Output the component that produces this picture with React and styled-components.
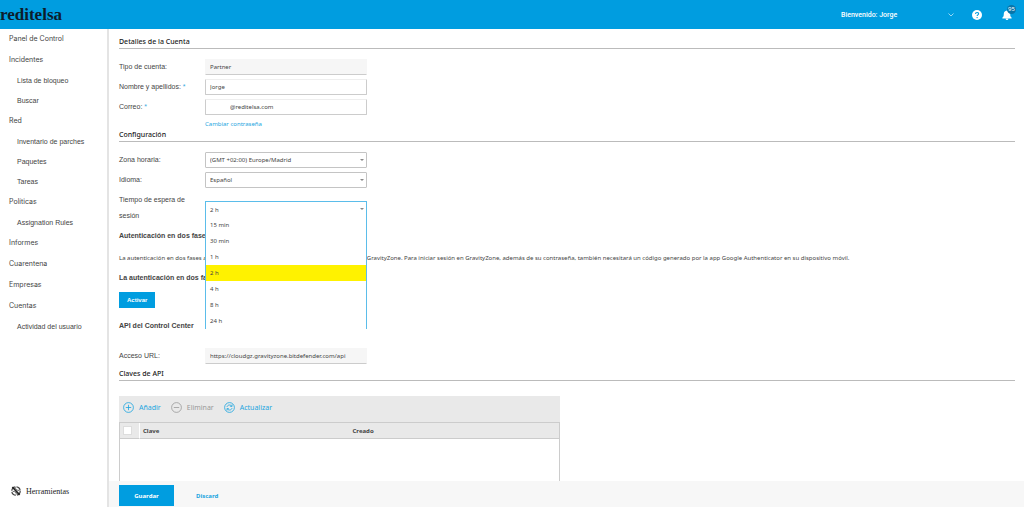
import React, { useState } from 'react'
import styled, { createGlobalStyle } from 'styled-components'


const menu = [
    { label: 'Panel de Control' },
    { label: 'Incidentes' },
    { label: 'Lista de bloqueo', sub: true },
    { label: 'Buscar', sub: true },
    { label: 'Red' },
    { label: 'Inventario de parches', sub: true },
    { label: 'Paquetes', sub: true },
    { label: 'Tareas', sub: true },
    { label: 'Políticas' },
    { label: 'Assignation Rules', sub: true },
    { label: 'Informes' },
    { label: 'Cuarentena' },
    { label: 'Empresas' },
    { label: 'Cuentas' },
    { label: 'Actividad del usuario', sub: true },
]

const timeouts = ['15 min', '30 min', '1 h', '2 h', '4 h', '8 h', '24 h']

export default function App() {
    const [timeout, setTimeoutValue] = useState('2 h')
    const [open, setOpen] = useState(true)

    const pick = (value) => {
        setTimeoutValue(value)
        setOpen(false)
    }

    return (
        <Page>
            <GlobalStyle />
            <Header>
                <Logo>reditelsa</Logo>
                <UserButton type="button">
                    Bienvenido: Jorge
                    <svg width="6" height="4" viewBox="0 0 6 4" aria-hidden="true">
                        <path d="M0.5 0.5 L3 3 L5.5 0.5" fill="none" stroke="#bfe6f8" strokeWidth="0.8" />
                    </svg>
                </UserButton>
                <IconButton type="button" aria-label="Ayuda">
                    <svg width="10" height="10" viewBox="0 0 10 10">
                        <circle cx="5" cy="5" r="5" fill="#fff" />
                        <path d="M3.5 3.9 C3.5 2 6.6 2 6.6 3.8 C6.6 4.9 5.1 4.8 5.1 6.1" fill="none" stroke="#009de0" strokeWidth="1.1" />
                        <circle cx="5.1" cy="7.6" r="0.7" fill="#009de0" />
                    </svg>
                </IconButton>
                <IconButton type="button" aria-label="Notificaciones">
                    <svg width="10" height="10" viewBox="0 0 10 10">
                        <path d="M5 0.4 C7.4 0.6 8.2 2.2 8.2 4 C8.2 6 8.6 6.8 9.6 7.6 V8.6 H0.4 V7.6 C1.4 6.8 1.8 6 1.8 4 C1.8 2.2 2.6 0.6 5 0.4 Z" fill="#fff" />
                        <path d="M3.6 8.4 H6.4 C6.2 10.4 3.8 10.4 3.6 8.4 Z" fill="#fff" />
                    </svg>
                    <Count>95</Count>
                </IconButton>
            </Header>

            <Sidebar>
                <nav>
                    {menu.map((item) => (
                        <MenuLink href="#" key={item.label} $sub={item.sub}>{item.label}</MenuLink>
                    ))}
                </nav>
                <Tools href="#">
                    <svg width="10" height="10" viewBox="0 0 10 10" aria-hidden="true">
                        <circle cx="5" cy="5" r="4.2" fill="none" stroke="#444" strokeWidth="1.2" strokeDasharray="5.4 1.2" />
                        <path d="M1.4 1 L8.6 8.8" stroke="#222" strokeWidth="1.7" />
                        <path d="M4.4 1.4 C4.4 3.4 6 4.6 8.4 4.4 M1.8 5.4 C3.8 5.2 5.4 6.4 5.4 8.4" fill="none" stroke="#444" strokeWidth="0.8" />
                    </svg>
                    Herramientas
                </Tools>
            </Sidebar>

            <Main>
                <Title>Detalles de la Cuenta</Title>
                <Fields>
                    <Row>
                        <Label htmlFor="type">Tipo de cuenta:</Label>
                        <Input id="type" defaultValue="Partner" readOnly />
                    </Row>
                    <Row>
                        <Label htmlFor="name">Nombre y apellidos: <Star>*</Star></Label>
                        <Input id="name" defaultValue="Jorge" />
                    </Row>
                    <Row>
                        <Label htmlFor="mail">Correo: <Star>*</Star></Label>
                        <Input id="mail" defaultValue="@reditelsa.com" $indent />
                    </Row>
                    <PasswordLink href="#">Cambiar contraseña</PasswordLink>
                </Fields>

                <Title>Configuración</Title>
                <Fields>
                    <Row>
                        <Label htmlFor="zone">Zona horaria:</Label>
                        <SelectBox>
                            <Select id="zone"><option>(GMT +02:00) Europe/Madrid</option></Select>
                        </SelectBox>
                    </Row>
                    <Row>
                        <Label htmlFor="lang">Idioma:</Label>
                        <SelectBox>
                            <Select id="lang"><option>Español</option></Select>
                        </SelectBox>
                    </Row>
                    <Row>
                        <Label as="span" id="timeout-label">Tiempo de espera de sesión</Label>
                        <Dropdown>
                            <DropdownButton
                                type="button"
                                aria-haspopup="listbox"
                                aria-expanded={open}
                                aria-labelledby="timeout-label"
                                onClick={() => setOpen(!open)}
                            >
                                {timeout}
                            </DropdownButton>
                            {open && (
                                <Options role="listbox" aria-labelledby="timeout-label">
                                    {timeouts.map((t) => (
                                        <Option
                                            key={t}
                                            role="option"
                                            aria-selected={t === timeout}
                                            onClick={() => pick(t)}
                                        >
                                            {t}
                                        </Option>
                                    ))}
                                </Options>
                            )}
                        </Dropdown>
                    </Row>
                </Fields>

                <SubTitle>Autenticación en dos fases</SubTitle>
                <Text>
                    La autenticación en dos fases añade una capa adicional de seguridad para su cuenta de GravityZone. Para iniciar sesión en GravityZone, además de su contraseña, también necesitará un código generado por la app Google Authenticator en su dispositivo móvil.
                </Text>
                <Status>La autenticación en dos fases está inactiva</Status>
                <Activate type="button">Activar</Activate>

                <SubTitle>API del Control Center</SubTitle>
                <ApiFields>
                    <Row>
                        <Label htmlFor="url">Acceso URL:</Label>
                        <Input id="url" defaultValue="https://cloudgz.gravityzone.bitdefender.com/api" readOnly />
                    </Row>
                </ApiFields>
                <Title>Claves de API</Title>

                <Panel>
                    <Toolbar>
                        <Action type="button">
                            <svg width="11" height="11" viewBox="0 0 11 11" aria-hidden="true">
                                <circle cx="5.5" cy="5.5" r="4.9" />
                                <path d="M5.5 2.8 V8.2 M2.8 5.5 H8.2" />
                            </svg>
                            Añadir
                        </Action>
                        <Action type="button" disabled>
                            <svg width="11" height="11" viewBox="0 0 11 11" aria-hidden="true">
                                <circle cx="5.5" cy="5.5" r="4.9" />
                                <path d="M2.8 5.5 H8.2" />
                            </svg>
                            Eliminar
                        </Action>
                        <Action type="button">
                            <svg width="11" height="11" viewBox="0 0 11 11" aria-hidden="true">
                                <circle cx="5.5" cy="5.5" r="4.9" />
                                <path d="M3 5 C3.4 2.6 6.6 2.4 7.8 4.2 M8 2.6 V4.4 H6.2 M8 6 C7.6 8.4 4.4 8.6 3.2 6.8 M3 8.4 V6.6 H4.8" />
                            </svg>
                            Actualizar
                        </Action>
                    </Toolbar>
                    <TableBox>
                        <Table>
                            <thead>
                                <tr>
                                    <CheckHead><Check type="checkbox" aria-label="Seleccionar todo" /></CheckHead>
                                    <Head>Clave</Head>
                                    <Head>Creado</Head>
                                </tr>
                            </thead>
                        </Table>
                    </TableBox>
                </Panel>
            </Main>

            <Footer>
                <Save type="button">Guardar</Save>
                <Discard type="button">Discard</Discard>
            </Footer>
        </Page>
    )
}

const GlobalStyle = createGlobalStyle`
    * {
        box-sizing: border-box;
    }
    body {
        margin: 0;
        background: #fff;
        color: #444;
        font-family: "Liberation Sans", Arial, sans-serif;
        font-size: 7px;
    }
    button, input, select {
        font-family: "Noto Sans", sans-serif;
        font-size: 6px;
        color: inherit;
        margin: 0;
    }
    a {
        text-decoration: none;
    }
`

const Page = styled.div`
    display: grid;
    grid-template-columns: 109px 1fr;
    grid-template-rows: 29px 1fr 26px;
    height: 100vh;
    overflow: hidden;
`

const Header = styled.header`
    grid-column: 1 / -1;
    display: flex;
    align-items: center;
    background: #009de0;
    color: #fff;
    padding: 1px 12px 0 0;
`

const Logo = styled.div`
    margin-right: auto;
    color: #0c1c2c;
    font-family: "Liberation Serif", serif;
    font-size: 17px;
    font-weight: bold;
`

const UserButton = styled.button`
    display: flex;
    align-items: center;
    justify-content: space-between;
    width: 113px;
    margin-right: 18px;
    padding: 0;
    background: none;
    border: none;
    font-family: Roboto, sans-serif;
    font-size: 7px;
    font-weight: 500;
`

const IconButton = styled.button`
    position: relative;
    display: flex;
    padding: 0;
    background: none;
    border: none;

    & + & {
        margin-left: 20px;
    }
`

const Count = styled.span`
    position: absolute;
    left: 5px;
    top: -5px;
    width: 9px;
    height: 9px;
    border-radius: 50%;
    background: #0874a8;
    font-size: 6px;
    line-height: 9px;
    text-align: center;
`

const Sidebar = styled.aside`
    grid-row: 2 / 4;
    display: flex;
    flex-direction: column;
    justify-content: space-between;
    border-right: 2px solid #e4e4e4;
    padding-bottom: 6px;
`

const MenuLink = styled.a`
    display: block;
    height: ${(props) => (props.$sub ? '20px' : '21px')};
    line-height: 20px;
    padding-left: ${(props) => (props.$sub ? '17px' : '9px')};
    font-family: ${(props) => (props.$sub ? '"Liberation Sans"' : 'Inter')}, sans-serif;
    color: #444;
`

const Tools = styled.a`
    display: flex;
    align-items: center;
    gap: 5px;
    height: 20px;
    padding-left: 11px;
    color: #222;
    font-family: "Liberation Serif", serif;
    font-size: 8px;
`

const Main = styled.main`
    min-width: 0;
    overflow: hidden;
    padding: 7px 9px 0 10px;
`

const Title = styled.h2`
    margin: 0;
    height: 13px;
    border-bottom: 1px solid #bbb;
    font-family: "Noto Sans", sans-serif;
    font-size: 7px;
    line-height: 12px;
    font-weight: 500;
    color: #222;
`

const Fields = styled.div`
    display: flex;
    flex-direction: column;
    gap: 4px;
    padding-top: 10px;
`

const ApiFields = styled(Fields)`
    padding: 14px 0 4px;
`

const Row = styled.div`
    display: grid;
    grid-template-columns: 86px 162px;
    align-items: start;
    line-height: 16px;
`

const Label = styled.label`
    padding-right: 10px;
`

const Star = styled.span`
    color: #3aabe2;
`

const Input = styled.input`
    width: 100%;
    height: 16px;
    padding: 0 4px;
    padding-left: ${(props) => (props.$indent ? '24px' : '4px')};
    border: 1px solid #ccc;
    border-top-color: #eee;
    border-radius: 1px;
    background: #fff;

    &:read-only {
        background: #f6f6f6;
        border-color: #f6f6f6;
        border-bottom-color: #ccc;
    }
`

const PasswordLink = styled.a`
    margin-left: 86px;
    color: #1ba5e0;
    font-family: "Noto Sans", sans-serif;
    font-size: 6px;
    line-height: 10px;
`

const SelectBox = styled.div`
    position: relative;

    &::after {
        content: '';
        position: absolute;
        right: 3px;
        top: 7px;
        border: 2px solid transparent;
        border-top-color: #888;
        pointer-events: none;
    }
`

const Select = styled.select`
    display: block;
    width: 100%;
    height: 16px;
    padding: 0 4px;
    appearance: none;
    border: 1px solid #c4c4c4;
    border-radius: 1px;
    background: #fff;
`

const Dropdown = styled(SelectBox)`
    height: 16px;
    margin-top: 9px;
`

const DropdownButton = styled.button`
    display: block;
    width: 100%;
    height: 16px;
    padding: 0 4px;
    border: 1px solid #5bbdea;
    border-bottom: none;
    background: #fff;
    text-align: left;
`

const Options = styled.ul`
    position: absolute;
    z-index: 10;
    top: 16px;
    left: 0;
    right: 0;
    margin: 0;
    padding: 0;
    list-style: none;
    border: 1px solid #5bbdea;
    border-width: 0 1px;
    background: #fff;
    font-family: "Noto Sans", sans-serif;
    font-size: 6px;
`

const Option = styled.li`
    height: 16px;
    padding-left: 4px;
    line-height: 16px;
    background: ${(props) => (props['aria-selected'] ? '#fff200' : '#fff')};
`

const SubTitle = styled.h3`
    margin: 4px 0 0;
    font-size: 7px;
    line-height: 16px;
`

const Text = styled.p`
    margin: 6px 0 0;
    font-family: "Noto Sans", sans-serif;
    font-size: 6px;
    line-height: 16px;
`

const Status = styled.p`
    margin: 4px 0 0;
    font-size: 7px;
    font-weight: bold;
    line-height: 16px;
`

const Activate = styled.button`
    display: block;
    height: 16px;
    margin: 6px 0 10px;
    padding: 0 8px;
    border: none;
    background: #009de0;
    color: #fff;
    font-family: "Liberation Sans", sans-serif;
    font-weight: bold;
`

const Panel = styled.section`
    width: 100%;
    max-width: 441px;
    margin-top: 15px;
`

const Toolbar = styled.div`
    display: flex;
    align-items: center;
    gap: 10px;
    height: 26px;
    padding: 0 4px 3px;
    background: #e9e9e9;
`

const Action = styled.button`
    display: flex;
    align-items: center;
    gap: 5px;
    padding: 0;
    border: none;
    background: none;
    color: #1ba5e0;
    font-size: 7px;

    svg {
        fill: none;
        stroke: currentColor;
        stroke-width: 0.8;
    }
    &:disabled {
        color: #999;
    }
`

const TableBox = styled.div`
    min-height: 120px;
    border: 1px solid #ccc;
`

const Table = styled.table`
    width: 100%;
    table-layout: fixed;
    border-spacing: 0;
`

const Head = styled.th`
    height: 16px;
    padding: 0 3px;
    border-bottom: 1px solid #ccc;
    background: #e9e9e9;
    font-family: "Noto Sans", sans-serif;
    font-size: 6px;
    text-align: left;
    line-height: 14px;
`

const CheckHead = styled(Head)`
    width: 20px;
    border-right: 1px solid #fff;
`

const Check = styled.input`
    display: block;
    appearance: none;
    width: 9px;
    height: 9px;
    background: #fff;
    border: 1px solid #ddd;
`

const Footer = styled.footer`
    display: flex;
    align-items: center;
    padding: 4px 10px 1px;
    background: #f7f7f7;
`

const Save = styled.button`
    align-self: stretch;
    width: 55px;
    border: none;
    background: #009de0;
    color: #fff;
    font-weight: bold;
`

const Discard = styled.button`
    margin-left: 22px;
    padding: 0;
    border: none;
    background: none;
    color: #1ba5e0;
    font-weight: bold;
`
